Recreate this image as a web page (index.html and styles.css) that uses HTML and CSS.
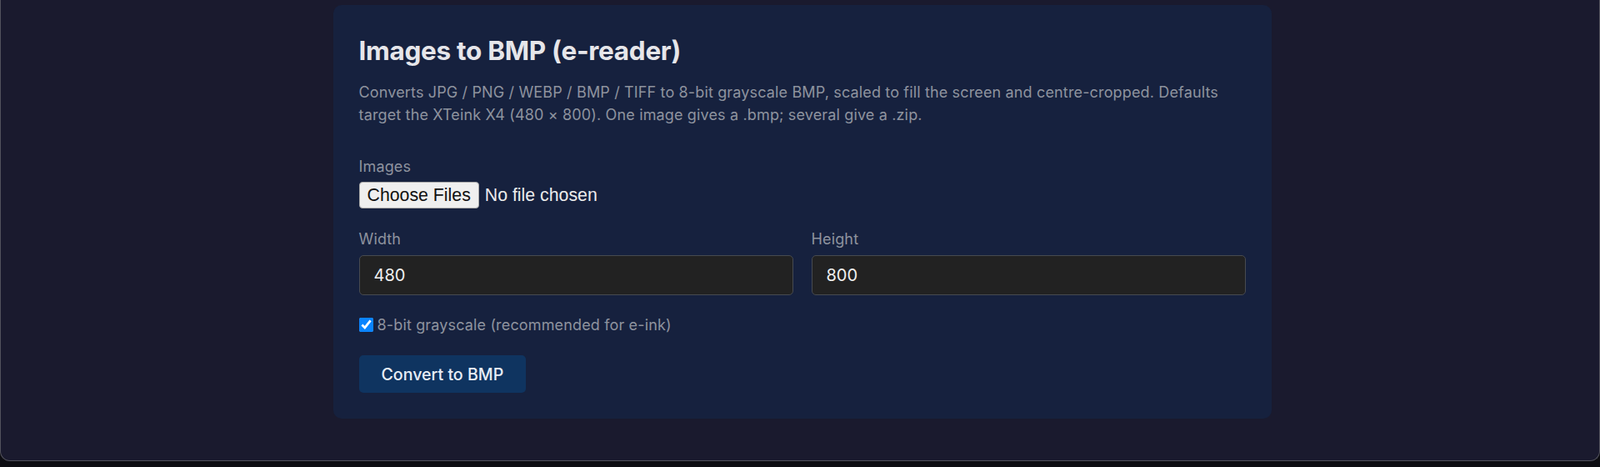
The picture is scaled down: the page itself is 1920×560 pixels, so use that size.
FILE: index.html
```html
<!DOCTYPE html>
<html lang="en">
<head>
<meta charset="utf-8">
<title>Images to BMP (e-reader)</title>
<link rel="stylesheet" href="styles.css">
</head>
<body>
<div class="screen">
  <main class="card">
    <h1 class="title">Images to BMP (e-reader)</h1>
    <p class="desc">Converts JPG / PNG / WEBP / BMP / TIFF to 8-bit grayscale BMP, scaled to fill the screen and centre-cropped. Defaults target the XTeink X4 (480 × 800). One image gives a .bmp; several give a .zip.</p>
    <div class="field field-file">
      <label class="label" for="files">Images</label>
      <input class="file" id="files" type="file" multiple accept="image/*">
    </div>
    <div class="row">
      <div class="field">
        <label class="label" for="w">Width</label>
        <input class="num" id="w" type="text" value="480">
      </div>
      <div class="field">
        <label class="label" for="h">Height</label>
        <input class="num" id="h" type="text" value="800">
      </div>
    </div>
    <label class="check">
      <input class="checkbox" type="checkbox" checked>
      <span>8-bit grayscale (recommended for e-ink)</span>
    </label>
    <button class="btn" type="button">Convert to BMP</button>
  </main>
</div>
<div class="dock"></div>
</body>
</html>
```
FILE: styles.css
```css
* { box-sizing: border-box; }
html, body { margin: 0; padding: 0; }
body {
  background: #0d0d12;
  font-family: Inter, "Noto Sans", sans-serif;
  height: 560px;
  overflow: hidden;
}
.screen {
  height: 553px;
  background: #1a1a2e;
  border: 1px solid #52525c;
  border-top: none;
  border-radius: 0 0 12px 12px;
  padding: 6px 0 0 5px;
}
.dock { height: 7px; }
.card {
  width: 1126px;
  margin: 0 auto;
  background: #16213e;
  border-radius: 10px;
  padding: 35px 31px 31px;
}
.title {
  margin: 0 0 16px;
  font-size: 31.5px;
  line-height: 40px;
  font-weight: 700;
  color: #e6e6ea;
  letter-spacing: -0.3px;
}
.desc {
  margin: 0 0 35px;
  font-size: 18px;
  line-height: 27px;
  letter-spacing: 0.15px;
  color: #8e939e;
}
.label {
  display: block;
  font-size: 18px;
  line-height: 27px;
  letter-spacing: 0.15px;
  color: #8e939e;
  margin-bottom: 5px;
}
.field-file { margin-bottom: 23px; }
.file {
  font: 21.3px "Liberation Sans", Arial, sans-serif;
  color: #ececec;
  height: 32px;
}
.file::file-selector-button {
  font: 21.3px "Liberation Sans", Arial, sans-serif;
  height: 32px;
  padding: 0 9px;
  margin-right: 7px;
  background: #efefef;
  color: #111;
  border: 1px solid #a9a9a9;
  border-radius: 4px;
}
.row {
  display: grid;
  grid-template-columns: 1fr 1fr;
  gap: 22px;
  margin-bottom: 22px;
}
.row .label { margin-bottom: 6px; }
.num {
  display: block;
  width: 100%;
  height: 48px;
  background: #222222;
  border: 1px solid #474a50;
  border-radius: 5px;
  padding: 0 17px;
  font-family: Inter, "Noto Sans", sans-serif;
  font-size: 20px;
  color: #f0f0f0;
  outline: none;
}
.check {
  display: flex;
  align-items: center;
  gap: 5px;
  height: 27px;
  font-size: 18px;
  letter-spacing: 0.15px;
  color: #8e939e;
  margin-bottom: 23px;
}
.checkbox {
  width: 17px;
  height: 17px;
  margin: 0;
  accent-color: #0a84ff;
}
.btn {
  display: block;
  height: 45px;
  padding: 0 27px;
  background: #0f3460;
  color: #e8eef6;
  border: none;
  border-radius: 5px;
  font-family: Inter, "Noto Sans", sans-serif;
  font-size: 19.6px;
  font-weight: 500;
}
```
